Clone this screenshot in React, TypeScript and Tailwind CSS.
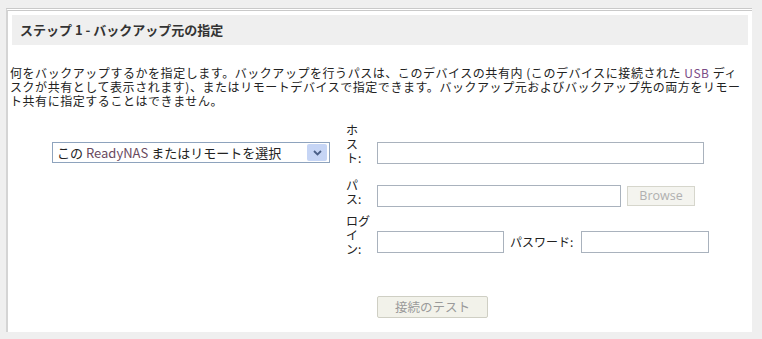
const jp = { fontFamily: '"Noto Sans CJK JP", "Noto Sans", sans-serif' };

function TextInput({ className }: { className: string }) {
  return <div className={`h-[22px] border border-[#a9b2bd] bg-white ${className}`} />;
}

export default function App() {
  return (
    <div className="h-[339px] w-[762px] overflow-hidden bg-[#efefef] pt-2 pl-1.5 text-[#222]" style={jp}>
      <div className="h-[324px] w-[746px] border-t-[3px] border-l-2 border-double border-t-[#c9c9c9] border-l-[#d4d4d4] bg-white pt-1">
        <div className="mx-1 flex h-[30px] items-center bg-[#efefef] pl-2 text-[13px] font-bold text-[#333]">
          ステップ 1 - バックアップ元の指定
        </div>

        <p className="mt-[21px] pl-0.5 text-[12px] leading-[14px] tracking-[0.55px] whitespace-nowrap">
          何をバックアップするかを指定します。バックアップを行うパスは、このデバイスの共有内 (このデバイスに接続された{' '}
          <span className="text-[#7a4a86]">USB</span> ディ
          <br />
          スクが共有として表示されます)、またはリモートデバイスで指定できます。バックアップ元およびバックアップ先の両方をリモー
          <br />
          ト共有に指定することはできません。
        </p>

        <div className="mt-[15px] flex">
          {/* source selector */}
          <div className="ml-[44px] mt-[19px] flex h-[21px] w-[278px] items-center justify-between border border-[#8ea3bd] bg-white pl-1 pr-[2px]">
            <span className="text-[13px] leading-none">
              この <span className="text-[#6a4a5e]">ReadyNAS</span> またはリモートを選択
            </span>
            <span className="flex h-[17px] w-[20px] items-center justify-center rounded-[2px] bg-[#c6d5f5]">
              <svg width="9" height="6" viewBox="0 0 9 6">
                <path d="M1 1 L4.5 4.5 L8 1" fill="none" stroke="#4a5f87" strokeWidth="1.8" />
              </svg>
            </span>
          </div>

          {/* remote fields */}
          <div className="ml-4 flex flex-col text-[12px] leading-[14px]">
            <div className="flex items-start">
              <div className="w-[31px]">
                ホ<br />ス<br />ト:
              </div>
              <TextInput className="mt-[19px] w-[327px]" />
            </div>

            <div className="mt-[13px] flex items-start">
              <div className="w-[31px]">
                パ<br />ス:
              </div>
              <TextInput className="mt-[7px] w-[244px]" />
              <div className="ml-[6px] mt-[8px] flex h-[20px] w-[68px] items-center justify-center border border-[#d6d6cc] bg-[#f4f4ef] text-[12.5px] text-[#b0b0b0]" style={{ fontFamily: '"Open Sans", sans-serif' }}>
                Browse
              </div>
            </div>

            <div className="mt-[7px] flex items-start">
              <div className="w-[31px]">
                ログ<br />イ<br />ン:
              </div>
              <TextInput className="mt-[17px] w-[127px]" />
              <span className="ml-[6px] mt-[21px] w-[71px]">パスワード:</span>
              <TextInput className="mt-[17px] w-[128px]" />
            </div>

            <div className="ml-[31px] mt-[40px] flex h-[22px] w-[111px] items-center justify-center rounded-[2px] border border-[#cfcfc4] bg-[#f2f2ea] text-[12.5px] text-[#9a9a9a]">
              接続のテスト
            </div>
          </div>
        </div>
      </div>
    </div>
  );
}
